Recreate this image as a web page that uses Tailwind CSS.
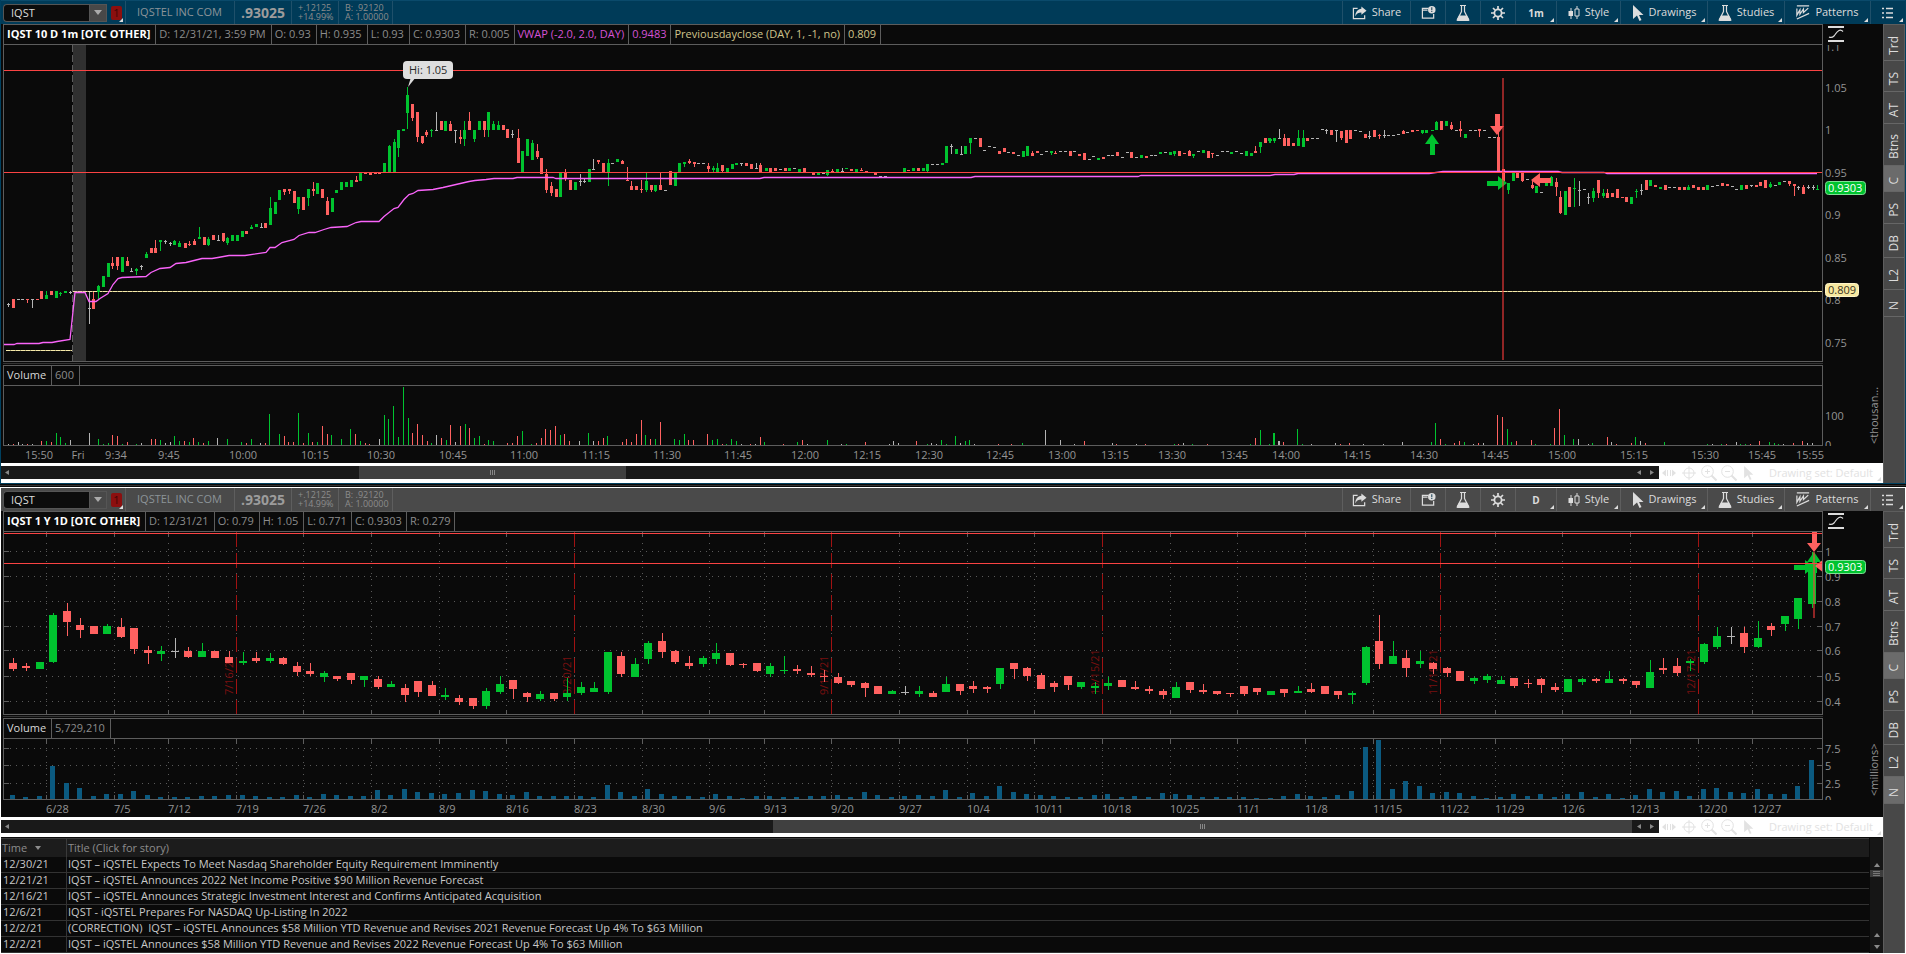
<!DOCTYPE html>
<html lang="en">
<head>
    <meta charset="UTF-8">
    <meta name="viewport" content="width=device-width, initial-scale=1.0">
    <title>IQST - Charts</title>
    <script src="https://cdn.jsdelivr.net/npm/@tailwindcss/browser@4"></script>
</head>
<body class="bg-white font-['Open_Sans','Noto_Sans',sans-serif] text-[11px] leading-4 text-[#8c8c8c] overflow-x-hidden">

<!-- Icon set -->
<svg class="hidden">
    <symbol id="i-share" viewBox="0 0 16 16">
        <path d="M6 3.5H1.5v11h12V11" fill="none" stroke="currentColor" stroke-width="1.3"/>
        <path d="M10 1.5l5.5 4.5-5.5 4.5V8C7 8 5 9 3.5 12c.2-4.500 2.500-7.500 6.500-8z" fill="currentColor"/>
    </symbol>
    <symbol id="i-window" viewBox="0 0 16 16">
        <path d="M8 3.500H1.500v10.500h12V9.500M1.500 5.500H7" fill="none" stroke="currentColor" stroke-width="1.300"/>
        <circle cx="11.500" cy="5" r="4" fill="currentColor"/>
        <path d="M11.500 2.500v3M11.500 6.500v1" stroke="#23485c" stroke-width="1.200"/>
    </symbol>
    <symbol id="i-flask" viewBox="0 0 14 18">
        <path d="M4 1.500h6M5.500 1.500v6L2 14.500h10L8.500 7.500v-6" fill="none" stroke="currentColor" stroke-width="1.200"/>
        <path d="M3 11.500h8l2.500 4.500q0 1-1 1h-11q-1 0-1-1z" fill="currentColor"/>
    </symbol>
    <symbol id="i-gear" viewBox="0 0 16 16">
        <circle cx="8" cy="8" r="3.600" fill="none" stroke="currentColor" stroke-width="1.800"/>
        <path d="M8 1v3M8 12v3M1 8h3M12 8h3M3 3l2 2M11 11l2 2M3 13l2-2M11 5l2-2" stroke="currentColor" stroke-width="1.700"/>
    </symbol>
    <symbol id="i-style" viewBox="0 0 12 16">
        <path d="M3 3v11" stroke="currentColor"/>
        <path d="M.5 6h4.500v5H.500z" fill="currentColor"/>
        <path d="M9 1v3M9 11v3M7 4h4v7H7z" fill="none" stroke="currentColor"/>
    </symbol>
    <symbol id="i-cursor" viewBox="0 0 12 16">
        <path d="M1 0l10.500 10H7l2.500 5-2 1-2.500-5.500L1 14z" fill="currentColor"/>
    </symbol>
    <symbol id="i-patterns" viewBox="0 0 16 18">
        <path d="M1 1.500h14M1 4.500V12l3.500-6v5l4-6v4L14 4M1 16.500L15 10" fill="none" stroke="currentColor" stroke-width="1.400"/>
    </symbol>
    <symbol id="i-list" viewBox="0 0 12 12">
        <path d="M0 1.500h2M4 1.500h7M0 6h2M4 6h7M0 10.500h2M4 10.500h7" stroke="currentColor" stroke-width="1.400"/>
    </symbol>
    <symbol id="i-scale" viewBox="0 0 16 16">
        <path d="M0 1h16M0 15h16" stroke="currentColor" stroke-width="2"/>
        <path d="M1 11c2 1 3 1 5-1s2-4 5-5.500q2-1 4 1" fill="none" stroke="currentColor" stroke-width="1.200"/>
    </symbol>
    <symbol id="i-pan" viewBox="0 0 14 10">
        <path d="M0 5l4-3.500v7zM14 5l-4-3.500v7z" fill="currentColor"/>
        <path d="M5.500 2v6M8.500 2v6" stroke="currentColor"/>
    </symbol>
    <symbol id="i-cross" viewBox="0 0 14 14">
        <path d="M7 0v14M0 7h14" stroke="currentColor"/>
        <circle cx="7" cy="7" r="5" fill="none" stroke="currentColor"/>
    </symbol>
    <symbol id="i-zoomin" viewBox="0 0 16 16">
        <path d="M10.500 10.500l5 5" stroke="currentColor" stroke-width="2"/>
        <path d="M6.500 4v5M4 6.500h5" stroke="currentColor"/>
        <circle cx="6.500" cy="6.500" r="5.800" fill="none" stroke="currentColor"/>
    </symbol>
    <symbol id="i-zoomout" viewBox="0 0 16 16">
        <path d="M10.500 10.500l5 5" stroke="currentColor" stroke-width="2"/>
        <path d="M4 6.500h5" stroke="currentColor"/>
        <circle cx="6.500" cy="6.500" r="5.800" fill="none" stroke="currentColor"/>
    </symbol>
</svg>

<!-- Intraday chart -->
<section class="border-x border-[#00405f] bg-[#0a0a0a]">
    <div data-toolbar="1m" data-bar="bg-[#003b58] border-[#0a4a6b]"></div>
    <div class="flex">
        <div class="flex-1 min-w-0">
            <div class="grid grid-cols-[1fr_60px]">
                <div class="ml-[2px] flex h-[21px] border border-[#5d5d5d] leading-[17px] whitespace-nowrap">
                    <h2 class="pl-[3px] pr-[5px] border-r border-[#5d5d5d] font-bold text-white">IQST 10 D 1m [OTC OTHER]</h2>
                    <span class="pl-[3px] pr-[5px] border-r border-[#5d5d5d]">D: 12/31/21, 3:59 PM</span>
                    <span class="pl-[3px] pr-[5px] border-r border-[#5d5d5d]">O: 0.93</span>
                    <span class="pl-[3px] pr-[5px] border-r border-[#5d5d5d]">H: 0.935</span>
                    <span class="pl-[3px] pr-[5px] border-r border-[#5d5d5d]">L: 0.93</span>
                    <span class="pl-[3px] pr-[5px] border-r border-[#5d5d5d]">C: 0.9303</span>
                    <span class="pl-[3px] pr-[4px] border-r border-[#5d5d5d]">R: 0.005</span>
                    <span class="pl-[3px] pr-[4px] border-r border-[#5d5d5d] text-[#d552d5]">VWAP (-2.0, 2.0, DAY)</span>
                    <span class="pl-[3px] pr-[4px] border-r border-[#5d5d5d] text-[#d552d5]">0.9483</span>
                    <span class="pl-[3px] pr-[4px] border-r border-[#5d5d5d] text-[#cfc48c]">Previousdayclose (DAY, 1, -1, no)</span>
                    <span class="pl-[3px] pr-[4px] border-r border-[#5d5d5d] text-[#cfc48c]">0.809</span>
                </div>
                <div class="pl-[5px] pt-[2px] text-[#dcdcdc]"><svg class="w-4 h-4"><use href="#i-scale"/></svg></div>

                <div class="ml-[2px] h-[317px] border-x border-b border-[#5d5d5d]"><svg id="price1" class="block w-full h-full"></svg></div>
                <svg id="axis1" class="block w-[60px] h-[317px]"></svg>

                <div class="ml-[2px] h-[2px] border-b border-[#333]"></div><div></div>

                <div class="ml-[2px] mt-px flex h-[20px] border border-b-0 border-[#5d5d5d] leading-[17px]">
                    <h3 class="pl-[3px] pr-[5px] border-r border-[#5d5d5d] text-[#d8d8d8]">Volume</h3>
                    <span class="pl-[3px] pr-[5px] border-r border-[#5d5d5d]">600</span>
                </div>
                <div></div>

                <div class="ml-[2px] h-[61px] border border-[#5d5d5d]"><svg id="vol1" class="block w-full h-full"></svg></div>
                <svg id="volAxis1" class="block w-[60px] h-[61px]"></svg>

                <svg id="time1" class="col-span-2 block w-full h-[17px]"></svg>
            </div>
            <div data-scroll="358,625"></div>
        </div>
        <nav data-tabs="C"></nav>
    </div>
</section>

<div class="h-[4px] border-t border-[#00405f] bg-[#0a0a0a] pt-px"><div class="h-px bg-[#333]"></div></div>

<!-- Daily chart -->
<section class="border-x border-white bg-[#0a0a0a]">
    <div data-toolbar="D" data-bar="bg-[#4a4a4a] border-white"></div>
    <div class="flex">
        <div class="flex-1 min-w-0">
            <div class="grid grid-cols-[1fr_60px]">
                <div class="ml-[2px] flex h-[21px] border border-[#5d5d5d] leading-[17px] whitespace-nowrap">
                    <h2 class="pl-[3px] pr-[5px] border-r border-[#5d5d5d] font-bold text-white">IQST 1 Y 1D [OTC OTHER]</h2>
                    <span class="pl-[3px] pr-[5px] border-r border-[#5d5d5d]">D: 12/31/21</span>
                    <span class="pl-[3px] pr-[5px] border-r border-[#5d5d5d]">O: 0.79</span>
                    <span class="pl-[3px] pr-[5px] border-r border-[#5d5d5d]">H: 1.05</span>
                    <span class="pl-[3px] pr-[4px] border-r border-[#5d5d5d]">L: 0.771</span>
                    <span class="pl-[3px] pr-[4px] border-r border-[#5d5d5d]">C: 0.9303</span>
                    <span class="pl-[3px] pr-[4px] border-r border-[#5d5d5d]">R: 0.279</span>
                </div>
                <div class="pl-[5px] pt-[2px] text-[#dcdcdc]"><svg class="w-4 h-4"><use href="#i-scale"/></svg></div>

                <div class="ml-[2px] h-[183px] border-x border-b border-[#5d5d5d]"><svg id="price2" class="block w-full h-full"></svg></div>
                <svg id="axis2" class="block w-[60px] h-[183px]"></svg>

                <div class="ml-[2px] h-[2px] border-b border-[#333]"></div><div></div>

                <div class="ml-[2px] mt-px flex h-[20px] border border-b-0 border-[#5d5d5d] leading-[17px]">
                    <h3 class="pl-[3px] pr-[5px] border-r border-[#5d5d5d] text-[#d8d8d8]">Volume</h3>
                    <span class="pl-[3px] pr-[5px] border-r border-[#5d5d5d]">5,729,210</span>
                </div>
                <div></div>

                <div class="ml-[2px] h-[62px] border border-[#5d5d5d]"><svg id="vol2" class="block w-full h-full"></svg></div>
                <svg id="volAxis2" class="block w-[60px] h-[62px]"></svg>

                <svg id="time2" class="col-span-2 block w-full h-[17px]"></svg>
            </div>
            <div data-scroll="772,1632"></div>

            <!-- News -->
            <div class="flex pt-px">
                <table class="flex-1 table-fixed w-full border-separate border-spacing-0 text-left text-[#c8c8c8]">
                    <thead>
                        <tr class="bg-[#1c1c1c] text-[#8c8c8c]">
                            <th class="w-[66px] h-[19px] p-0 pl-px border-t border-r border-[#3a3a3a] font-normal">
                                <button class="flex items-center gap-2">Time <svg class="w-[6px] h-[4px]" viewBox="0 0 6 4"><path d="M0 0h6L3 4z" fill="currentColor"/></svg></button>
                            </th>
                            <th class="p-0 pl-px border-t border-[#3a3a3a] font-normal">Title (Click for story)</th>
                        </tr>
                    </thead>
                    <tbody id="news"></tbody>
                </table>
                <div class="ml-px w-[13px] bg-[#161616] text-[#8c8c8c] flex flex-col items-center">
                    <svg class="mt-[25px] w-[6px] h-1" viewBox="0 0 6 4"><path d="M0 4h6L3 0z" fill="currentColor"/></svg>
                    <div class="mt-[3px] w-full h-[7px] bg-[#3c3c3c] px-[3px] py-px flex flex-col justify-between">
                        <i class="h-px bg-[#777]"></i><i class="h-px bg-[#777]"></i><i class="h-px bg-[#777]"></i>
                    </div>
                    <svg class="mt-auto w-[6px] h-1" viewBox="0 0 6 4"><path d="M0 4h6L3 0z" fill="currentColor"/></svg>
                    <svg class="mt-2 mb-1 w-[6px] h-1" viewBox="0 0 6 4"><path d="M0 0h6L3 4z" fill="currentColor"/></svg>
                </div>
            </div>
        </div>
        <nav data-tabs="C,N"></nav>
    </div>
</section>

<script>
const GREEN = '#00c32f', RED = '#ff6160', GRAY = '#b4b4b4', LINE = '#fa4343';
const COLORS = { g: GREEN, r: RED, w: GRAY };
const corner = '<i class="absolute right-[2px] bottom-[2px] border-l-4 border-b-4 border-l-transparent border-b-[#dcdcdc]"></i>';

// Toolbars
document.querySelectorAll('[data-toolbar]').forEach((el, n) => {
    const tf = el.dataset.toolbar;
    const sep = n === 0 ? 'border-[#1f506a]' : 'border-[#5e5e5e]';
    const btn = (w, icon, size, label, mark) => `
        <button class="relative ${w} h-full border-l ${sep} flex items-center justify-center gap-[5px]" aria-label="${label || icon}">
            ${icon ? `<svg class="${size}"><use href="#i-${icon}"/></svg>` : ''}${label ? `<span class="leading-[18px] pb-px">${label}</span>` : ''}${mark ? corner : ''}
        </button>`;
    el.innerHTML = `
    <header class="${el.dataset.bar} border-t h-6 flex text-[#dcdcdc] whitespace-nowrap">
        <div class="relative w-[124px] flex items-center pl-[2px]">
            <label class="sr-only" for="sym${n}">Symbol</label>
            <input id="sym${n}" value="IQST" class="w-[86px] h-[18px] pl-[7px] leading-4 rounded-l-sm border border-r-0 border-[#555] bg-[#0c0c0c] outline-none">
            <button aria-label="Symbols" class="w-[18px] h-[18px] border border-[#555] bg-[#484848] flex items-center justify-center">
                <svg class="w-2 h-[5px]" viewBox="0 0 8 5"><path d="M0 0h8L4 5z" fill="#aaa"/></svg>
            </button>
            <button class="ml-1 w-[11px] h-[14px] rounded-xs bg-[#8c0f0f] text-[#3c0505] leading-[14px]">1</button>${corner}
        </div>
        <div class="w-[109px] border-l ${sep} pl-[11px] leading-[21px] text-[#8c9498]">IQSTEL INC COM</div>
        <div class="w-[57px] border-l ${sep} pl-[6px] leading-[23px] text-[14px] font-bold text-[#9c9c9c]">.93025</div>
        <div class="w-[47px] border-l ${sep} pl-[6px] pt-[2px] text-[9px] leading-[9px] text-[#8c8c8c]">+.12125<br>+14.99%</div>
        <div class="w-[55px] border-x ${sep} pl-[6px] pt-[2px] text-[9px] leading-[9px] text-[#8c8c8c]">B: .92120<br>A: 1.00000</div>
        <div class="ml-auto flex">
            ${btn('w-[68px]', 'share', 'w-[15px] h-[15px]', 'Share')}
            ${btn('w-[35px]', 'window', 'w-[15px] h-[15px]')}
            ${btn('w-[35px]', 'flask', 'w-[14px] h-[18px]')}
            ${btn('w-[35px]', 'gear', 'w-4 h-4')}
            <button class="relative w-[41px] h-full border-l ${sep} text-[10px] font-bold">${tf}${corner}</button>
            ${btn('w-[64px]', 'style', 'w-3 h-4', 'Style', true)}
            ${btn('w-[87px]', 'cursor', 'w-3 h-4', 'Drawings', true)}
            ${btn('w-[77px]', 'flask', 'w-[14px] h-[18px]', 'Studies', true)}
            ${btn('w-[86px]', 'patterns', 'w-[14px] h-[17px]', 'Patterns', true)}
            ${btn('w-[35px]', 'list', 'w-3 h-3', '', true)}
        </div>
    </header>`;
});

// Side tabs
document.querySelectorAll('[data-tabs]').forEach(el => {
    const active = el.dataset.tabs.split(',');
    const tabs = [['Trd', 'h-[36px]'], ['TS', 'h-[31px]'], ['AT', 'h-[32px]'], ['Btns', 'h-[42px]'], ['C', 'h-[26px]'],
                  ['PS', 'h-[32px]'], ['DB', 'h-[34px]'], ['L2', 'h-[32px]'], ['N', 'h-[27px]']];
    el.className = 'w-[22px] border-l border-t border-r border-[#5d5d5d] bg-[#484848] text-[#dcdcdc]';
    el.innerHTML = tabs.map(([t, h]) => `
        <button class="${h} w-full pt-[5px] border-b border-[#666] flex items-center justify-center ${active.includes(t) ? 'bg-[#6b6b6b]' : ''}">
            <span class="[writing-mode:vertical-rl] rotate-180 text-[12px] leading-[16px]">${t}</span>
        </button>`).join('');
});

// Scrollbars + drawing tools
document.querySelectorAll('[data-scroll]').forEach(el => {
    const [a, b] = el.dataset.scroll.split(',').map(Number);
    el.innerHTML = `
    <div class="h-5 bg-white flex items-start text-[#e2e2e2]">
        <div class="relative flex-1 mt-[3px] h-[13px] bg-[#191919]">
            <div class="absolute inset-y-0 bg-[#404040] flex items-center justify-center gap-px" style="left:${a / 16.59}%;width:${(b - a) / 16.59}%">
                <i class="w-px h-[5px] bg-[#888]"></i><i class="w-px h-[5px] bg-[#888]"></i><i class="w-px h-[5px] bg-[#888]"></i>
            </div>
            <svg class="absolute left-1 top-1 w-1 h-[5px]" viewBox="0 0 4 5"><path d="M4 0v5L0 2.500z" fill="#888"/></svg>
            <svg class="absolute right-[18px] top-1 w-1 h-[5px]" viewBox="0 0 4 5"><path d="M4 0v5L0 2.500z" fill="#888"/></svg>
            <svg class="absolute right-[5px] top-1 w-1 h-[5px]" viewBox="0 0 4 5"><path d="M0 0v5l4-2.500z" fill="#888"/></svg>
        </div>
        <div class="relative w-[224px] h-full flex items-center whitespace-nowrap">
            <button aria-label="Pan" class="ml-[3px]"><svg class="w-[14px] h-[10px]"><use href="#i-pan"/></svg></button>
            <button aria-label="Crosshair" class="ml-[6px]"><svg class="w-[14px] h-[14px]"><use href="#i-cross"/></svg></button>
            <button aria-label="Zoom in" class="ml-[5px]"><svg class="w-4 h-4"><use href="#i-zoomin"/></svg></button>
            <button aria-label="Zoom out" class="ml-1"><svg class="w-4 h-4"><use href="#i-zoomout"/></svg></button>
            <button aria-label="Pointer" class="ml-[6px]"><svg class="w-[11px] h-[14px]"><use href="#i-cursor"/></svg></button>
            <button class="ml-[15px]">Drawing set: Default</button>
            <i class="absolute right-[2px] bottom-[2px] border-l-4 border-b-4 border-l-transparent border-b-[#dcdcdc]"></i>
        </div>
    </div>`;
});

// News table
const news = [
    ['12/30/21', 'IQST – iQSTEL Expects To Meet Nasdaq Shareholder Equity Requirement Imminently'],
    ['12/21/21', 'IQST – iQSTEL Announces 2022 Net Income Positive $90 Million Revenue Forecast'],
    ['12/16/21', 'IQST – iQSTEL Announces Strategic Investment Interest and Confirms Anticipated Acquisition'],
    ['12/6/21', 'IQST - iQSTEL Prepares For NASDAQ Up-Listing In 2022'],
    ['12/2/21', '(CORRECTION)  IQST – iQSTEL Announces $58 Million YTD Revenue and Revises 2021 Revenue Forecast Up 4% To $63 Million'],
    ['12/2/21', 'IQST – iQSTEL Announces $58 Million YTD Revenue and Revises 2022 Revenue Forecast Up 4% To $63 Million'],
];
document.getElementById('news').innerHTML = news.map(([d, t]) => `
    <tr><td class="h-4 p-0 pl-[2px] align-top leading-[13px] border-b border-r border-[#333]">${d}</td>
        <td class="h-4 p-0 pl-px align-top leading-[13px] border-b border-[#333] whitespace-pre"><a href="#">${t}</a></td></tr>`).join('');

// Chart data. Candle: colour, body top-bottom, optional :wick top-bottom
const STEP1 = 4.7625, STEP2 = 13.53, WIDTH = 1818;
const candles1 = [
    [8, 'w304:303-307 r299-308 w299 w299 r299:299-303 w299:299-308 r299 r291-299 g295-299:291-299 r291-295 g291-298 g293-294:292-296 g291-293 w292:291-294'],
    [88.6, 'w308:292-324 r299-309:292-309 g286-292:285-299 g276-287 g263-277 r263-266:257-269 r257-266:257-270 g257-272 r261-266:257-266 w271:268-272 g269-271:268-275 w266:265-270 g254-258:252-258 r248-253 r248-253:240-253 g240-242:240-251 w241:240-244 w243:242-246 g241-245:240-245 g243-247:241-247'],
    [184.5, 'r243-248 r244-245:241-246 r241-245:239-245 g237-239:227-239 r237-245 g239-245:237-246 r235-240 w240:235-241 r233-241:233-242 g238-243:237-245 g235-241 g235-241 g231-237 r231-234 g227-229:225-229 g224-227 w227:223-228 r223-228'],
    [269.8, 'g208-225:197-225 g202-214 g190-200 r189-192:189-195 r189-191:189-194 r191-203 g197-209:197-214 r197-210 g189-198:189-206 r189-191:182-196 g183-194 r189-198 r201-215:197-215 g198-212 g190-193 g182-190 g182-187 g180-187 r180-182:176-182 g173-181 r173-174 r173-175 r173-174 r173-174 g163-172 g146-172:145-172 g142-172:139-172 g130-148:130-157 g129-131'],
    [407.3, 'g95-113:87-129 r104-118:104-121 r112-137:112-142 r136-143:136-144 r132-135:130-137 g130-131:129-137 w130:112-130 r121-130 g121-131 r124-131:121-131 w130:130-143 r137-139:130-144 g130-139:121-146 r121-130:112-130 g130-139:130-142 g121-130 r121-130:121-137 g112-130:112-137 g124-130:121-130 g125-130:121-130 r125-130 r129-138 w134:130-138'],
    [517.6, 'r138-163:129-163 g151-172 g139-156 g143-160:140-160 r151-157:144-159 r158-174 r174-190:169-193 r186-193:182-196 r189-197 g173-197 r172-179:169-181 r180-190 g182-190 w181:174-186 w181:178-183'],
    [588.6, 'g169-182 w169:159-170 r160-162:160-164 r163-172 g163-172:159-186 w163 g159-162 r161-164:160-164 r180-181:167-181 r186-190:181-190 r186-190'],
    [641.2, 'r189-190:180-193 g181-190:173-192 r185-190:185-192 g185-191:185-192 r185-190:173-190 w190 r171-185 g173-186 g163-172 g162-164:162-167 r161-163:159-164 r162-164:162-167 w163 w163 r166-169:163-172 g168-170:166-172 g168-172:163-172 r165-171:165-172 g168-172 g164-169 g163-165 w163:163-166 r163-166 r164-169 w168:163-169 r165-172:163-172'],
    [765.5, 'g168-171 r168-172 r168-171 w169 r168-171 g168-171 w168 g169-172 r168-172 r172-173 r173-175 g173-175 w173 g170-175:170-176 r171-172:169-172 g169-172 w171:168-172 g168-169 r169-171 g169-172 r170-171:168-171 r171-172 r172-173 r173-175 w176 w176'],
    [903.5, 'g168-172 r170-171 g168-171 r168-171 g168-171 g164-171:164-172 w164 w164 g163-165 g146-163 w146:144-154 g149-154 w154:146-155 g146-154 g138-143:138-154 w138 r138-147 w150 w146 w147 r151-154 r148-152 w152 r152-154 w155 g151-157 g146-156 r153-156:151-156 r151-153'],
    [1041, 'w154 w151 g151-153:151-155 r153:151-154 w151 w151 r151-156 w151 r154-156 r153-160 w159 w156 g158-160 r157-159 w155 w155 r152-156 w157 w152 r152-158 w157 g155-158 r156-158 w155 w155 g152-154 w152 g152-155 g151-154:151-156 r151-156 r153-154'],
    [1188.6, 'r151-156:150-156 g154-156:154-158 w151 g150-153 r151-158 r153:153-158 w155 w151 w151 g152-154 w151 w153 g151-156 g153-156 r151-153:146-153 g142-147:142-153 r138-143 g139-141:138-143 g138-141 w138:129-139'],
    [1269.3, 'g138-141:138-143 g138-141:138-143 w138:129-138 r138-146:134-146 r138-146:138-146 r143-146 g138-146:130-146 g138-147:130-147 r138-141 w138 w138 w129 w130:129-134 r130-135 w130:130-142 r131-138:131-140 r130-143 r130-139 w130 w131 r134-138 w136:131-139 r130-137 r135:134-139 w135:130-138 w135 w135 w134 r131-134:130-134 w132 r130-132 r130-131 g130-133:130-134 g130-133'],
    [1431.7, 'g130 g122-130:121-130 r121-130 g121-126 r125-129:122-130 w130 r129-131:121-137 g134-138 w130 w130 r129-131:129-137 w130 w137 w137 r137-172:131-172 r169-182 g183-190:183-194 g173-181 r173-178 r173-181:173-182 w179 r185-188:180-189 g186-193 w192 g180-186 g177-186:176-186 r182-187:178-196 r197-213:191-214 g191-215'],
    [1569.3, 'r187-207 g188-189:178-207 w190:181-206 w189 w197:193-204 g191-198:188-202 r180-193:180-198 g193-196:189-198 r193-198:189-198 r193-197 r189-198 r197 r197-202 g197-204 g191-192:189-198 w190:184-195 r180-190 g180-186 r185-187 g187-189 r185-190 w187 w187 r187-190 r187-190 g187-190:185-190 r185-188 r187-190 r187-190 g185-190 w186'],
    [1717.4, 'w185 r183-186 r184-186 w186 w189 g185-190 r185-189 w185:185-187 r185-187 r182-186 r180-188 g184-187:182-188 w185 g182-185 w181 r181-184:181-186 r184-186:184-196 w187:186-190 r187-194:185-194 w187:185-189 w187:185-190 g189:185-190'],
];
const volume1 = [
    [8, 'w1 r1 w3 w1 r1 w1 . r4 g4 r3 g12 g8 g2 w5'],
    [88.6, 'w12 . g6 g1 g2 r10 r9 g1 r3 . g1 w2 . r6 r6 g5 w2 w3 g9 g4 r4 g3 r7 g3 r2 g4 . w7 . g6 . . g3 r2 g6 . w2 r2'],
    [269.4, 'g31 . g11 r9 r3 r3 g32 r2 g12 r3 g3 r19 r11 g10 . g6 . g16 r11 g4 r2 r1 . w6 g30 g26 g39 g8 g58 g27 r12 r21 r10 r4 g2 w10 r7 g5 r20 w3 r19 g21 r17 g7 g9 r1 g5 g4'],
    [507.3, 'r2 r2 r9 g14 . g1 r2 r7 r16 r15 r19 g10 r11 r4 . w4 . g12 w4 r4 r7 g9 . . r3 r6 r3 r11 r25 g10 r6 g6 r23 . . g6 g5 g11 r5 r5 . . r11 g5 g6 r1 g1 g6 g4 w1 . r1 w1 r8 g3'],
    [783, 'r1 . . g3 r5 w1'], [826.5, 'g5 . . w1 g1'], [864.5, 'r3'], [888.5, 'w1 w4 w2'], [916, 'r4'],
    [926.5, 'g1 w2 w1 g5 g1 . g9 w2 g4 g5 w1'], [997.5, 'r1'], [1011, 'r1'], [1021.5, 'g2'], [1045, 'w15'], [1059.5, 'w5'],
    [1073.5, 'w1'], [1083.5, 'r4'], [1111.5, 'w2 r1'], [1135.5, 'w1'], [1145, 'r1'], [1173.5, 'g1 r1 w2'], [1192, 'g1'], [1207, 'r1'],
    [1250, 'g1 r7 g15 . g1 g12 w4'],
    [1273, 'g12 w4 r3 . . g16 g1 . w1 . . . . w2 r1 . r2 . . w1 . . . w1 . . . w3'],
    [1430.5, 'g3 g22 r6 g1 . r2 r4 g3 . w1 r2 w2 . . r30 r28 g16 g3 r4 . . r5 g1 . . g1 r17 r36 g10 . g6 w6 . w1 g2 . . r8 w3 r1 . . r2 g8 w4 r2 . . . g3'],
    [1707, 'g1 w1 . g1 r1 . w3 g1 g1 r1 . r4 . g3 g2 g1 w1 . r2 . r4 w2 w2'],
];
const vwap = '4,344 14,344 17,343 39,343 43,342 52,342 57,341 70,339 75,292 85,292 89,301 96,301 100,298 108,293 113,284 118,278 122,277 146,276 151,272 160,268 170,267 176,263 186,262 202,258 212,258 218,257 229,255 245,255 266,252 270,247 275,247 282,242 294,239 299,235 309,232 315,232 324,229 331,227 347,226 356,222 361,221 379,221 384,216 394,208 398,207 404,199 409,194 413,193 418,190 433,189 443,187 469,181 475,180 486,179 494,178 513,178 517,177 553,177 556,178 760,178 764,177 971,177 975,176 1138,176 1141,175 1270,175 1275,174 1294,174 1298,173 1429,173 1443,171 1558,171 1562,172 1604,172 1607,173 1817,173';
const times1 = [['15:50', 39], ['Fri', 78], ['9:34', 116], ['9:45', 169], ['10:00', 243], ['10:15', 315], ['10:30', 381], ['10:45', 453], ['11:00', 524],
    ['11:15', 596], ['11:30', 667], ['11:45', 738], ['12:00', 805], ['12:15', 867], ['12:30', 929], ['12:45', 1000], ['13:00', 1062], ['13:15', 1115],
    ['13:30', 1172], ['13:45', 1234], ['14:00', 1286], ['14:15', 1357], ['14:30', 1424], ['14:45', 1495], ['15:00', 1562], ['15:15', 1634],
    ['15:30', 1705], ['15:45', 1762], ['15:55', 1810]];

const candles2 = [[12.5, 'r303-309:298-311 r306-308:303-311 g302-309 g255-302:253-303 r251-262:243-276 r265-270:258-278 r266-274 g266-274:264-274 r267-277:258-278 r268-289:268-294 r290-293:286-304 g291-294:286-301 w291:278-298 r291-297:287-298 g291-297:283-297 r291-298 r297-303:291-303 g301-303:292-305 r298-301:292-303 g298-301:293-303 r298-304:297-305 r306-312:302-316 r311-314:303-316 g313-317:311-322 r316-319:316-321 r313-320:313-324 g316-320:316-327 r319-327:316-329 g324-327:321-327 r328-335:324-342 r321-332:321-337 r325-336:321-336 g335-337:328-340 r338-342:335-345 r338-346:338-349 g331-346:328-349 g324-332:316-334 r320-329:320-339 r333-337:332-342 g334-339:331-341 r333-339:333-341 g333-337:318-341 g327-333:322-335 g328-332:322-332 g292-332:292-334 r296-314:292-317 g304-317:298-317 g283-299:281-304 r281-292:273-298 r291-302:290-304 r303-306:296-309 g298-304:296-307 g293-299:283-304 r293-305:293-306 r304-305:303-308 r303-311:303-312 g306-314:303-317 g310-311:296-314 r309-311:305-314 r313-315:306-317 r316-317:310-322 r317-323:313-324 r321-325:321-327 r323-328:322-337 r326-334 g331-334:330-334 w332:326-335 g331-334:326-337 r333-337:331-337 g324-332:317-332 r324-331:324-335 r326-329:321-333 r327-329:326-333 g308-324:308-329 r303-309:303-319 r308-316:307-321 r315-329:313-329 r323-327:321-332 r316-325:316-330 g322-327:322-329 g326-328:322-334 g323-326:317-330 r320-327 r327-329:321-330 r329-331:326-334 r331-335:329-339 g327-338:322-338 r322-330:322-333 r330-332:324-334 r331-334:331-335 r333:333-337 r326-334:326-336 r328-332:328-335 g331-335 r329-333:329-337 g331-333:326-333 r329-332:323-333 r326-334 r331-335:331-339 g333-335:331-344 g287-323:286-325 r281-304:255-309 g296-304:281-304 r298-308:290-317 g301-304:291-308 r303-309:302-314 r308-313:307-317 r311-321 g318-321:317-324 g316-320:314-323 g320-324:316-324 r318-326:318-328 r323:319-328 r319-325:318-333 r327-330:323-332 g319-332 g319-322:318-325 r319-321:318-323 g319-323:311-323 r319-321:318-324 r321-325:321-328 g312-328:300-328 r308-310:298-314 r306-313:298-316 g301-303:299-311 g284-302:283-304 g276-287:267-289 w276:267-284 r273-287:267-293 g278-287:261-288 r266-270:263-276 g256-264:256-271 g238-259:238-269 g204-244:192-248']];
const volume2 = [4,2,3,33,16,11,3,5,5,8,4,2,2,2,3,3,4,4,3,2,2,4,2,5,4,3,3,9,4,10,7,6,5,6,9,8,5,4,7,3,3,3,3,2,14,7,3,
    10,5,3,3,2,5,3,1,3,3,2,2,3,3,4,2,7,4,2,3,4,3,9,2,6,3,13,7,5,4,3,2,2,4,5,2,3,2,6,5,4,2,2,2,2,1,1,
    3,5,3,2,4,8,52,59,10,18,13,6,7,6,3,1,2,5,3,5,2,5,7,2,5,1,4,10,7,8,3,10,11,7,6,10,5,5,13,39];
const times2 = [['6/28', 46], ['7/5', 114], ['7/12', 168], ['7/19', 236], ['7/26', 303], ['8/2', 371], ['8/9', 439], ['8/16', 506], ['8/23', 574],
    ['8/30', 642], ['9/6', 709], ['9/13', 764], ['9/20', 831], ['9/27', 899], ['10/4', 967], ['10/11', 1034], ['10/18', 1102], ['10/25', 1170],
    ['11/1', 1237], ['11/8', 1305], ['11/15', 1373], ['11/22', 1440], ['11/29', 1495], ['12/6', 1562], ['12/13', 1630], ['12/20', 1698], ['12/27', 1752]];
const expirations = [['7/16/21', 236], ['8/20/21', 574], ['9/17/21', 831], ['10/15/21', 1102], ['11/19/21', 1440], ['12/17/21', 1698]];

const $ = id => document.getElementById(id);
const rect = (x, y, w, h, c) => `<rect x="${x}" y="${y}" width="${w}" height="${h}" fill="${c}"/>`;
const text = (x, y, s, extra = '') => `<text x="${x}" y="${y}" fill="#949494" ${extra}>${s}</text>`;
const poly = (pts, c, dx, dy) => `<polygon points="${pts}" fill="${c}" transform="translate(${dx} ${dy})"/>`;
const ARROW = {
    up: '0,0 7,10 3,10 3,21 -2,21 -2,10 -7,10',
    down: '0,0 7,-9 3,-9 3,-21 -2,-21 -2,-9 -7,-9',
    right: '0,0 -9,-7 -9,-2 -20,-2 -20,3 -9,3 -9,7',
    left: '0,0 9,-7 9,-2 20,-2 20,3 9,3 9,7',
};

function drawCandles(segments, step, w, X, top) {
    let out = '';
    for (const [x0, list] of segments) {
        list.split(' ').forEach((item, i) => {
            const x = Math.round(X(x0 + i * step));
            const [body, wick] = item.slice(1).split(':');
            const [a, b = a] = body.split('-').map(Number);
            const c = COLORS[item[0]];
            if (wick) {
                const [t, u] = wick.split('-').map(Number);
                out += rect(x, t - top, 1, Math.max(1, u - t), c);
            }
            out += rect(x - Math.floor(w / 2), a - top, w, Math.max(1, b - a), c);
        });
    }
    return out;
}

function badge(y, w, label, bg, fg, line) {
    return `<rect x="2.5" y="${y}.5" width="${w}" height="13" rx="3" fill="${bg}" stroke="${line}"/><text x="5" y="${y + 11}" fill="${fg}">${label}</text>`;
}

function draw() {
    const W = $('price1').clientWidth || $('price1').parentElement.clientWidth;
    const s = W / WIDTH;
    const X = x => (x - 4) * s;

    // Intraday price
    let o = rect(X(73), 0, 13 * s, 316, '#303030');
    o += `<path d="M${Math.round(X(72)) + 0.5} 0V316" stroke="#5d5d5d" stroke-dasharray="7 3"/>`;
    o += `<path d="M${X(6)} 305.5H${X(72)}M${X(73)} 246.5H${W}" stroke="#a89f70"/>`;
    o += `<path d="M${X(6)} 305.5H${X(72)}M${X(73)} 246.5H${W}" stroke="#f5e9a8" stroke-dasharray="4 1"/>`;
    o += drawCandles(candles1, STEP1, 3, X, 45);
    o += `<polyline points="${vwap.split(' ').map(p => { const [x, y] = p.split(','); return X(+x) + ',' + (y - 44.5); }).join(' ')}" fill="none" stroke="#fa64fa" stroke-width="1.3"/>`;
    o += rect(0, 25, W, 1, LINE) + rect(0, 127, W, 1, LINE);
    o += poly(ARROW.up, GREEN, X(1432), 89) + poly(ARROW.down, RED, X(1497), 90);
    o += poly(ARROW.right, GREEN, X(1507), 138) + poly(ARROW.left, RED, X(1531), 135);
    o += `<rect x="${Math.round(X(1502))}" y="33" width="2" height="282" fill="#ff3c3c" opacity=".55"/>`;
    o += poly('0,0 3,-10 8,-10', '#dcdcdc', X(408), 42);
    o += `<rect x="${X(403)}" y="16" width="50" height="18" rx="4" fill="#dedede"/><text x="${X(409)}" y="29" fill="#2a2a2a">Hi: 1.05</text>`;
    $('price1').innerHTML = o;

    $('axis1').innerHTML = [['1.1', 47], ['1.05', 88], ['1', 130], ['0.95', 173], ['0.9', 215], ['0.85', 258], ['0.8', 300], ['0.75', 343]]
        .map(([t, y]) => text(2, y - 41, t)).join('')
        + badge(136, 40, '0.9303', GREEN, '#fff', '#7fe096') + badge(238, 33, '0.809', '#f8e9a0', '#3a3420', '#fff5c8');

    // Intraday volume
    o = '';
    for (const [x0, list] of volume1) {
        list.split(' ').forEach((v, i) => {
            if (v !== '.') o += rect(Math.round(X(x0 + i * STEP1)), 59 - v.slice(1), 1, v.slice(1), COLORS[v[0]]);
        });
    }
    $('vol1').innerHTML = o;
    $('volAxis1').innerHTML = text(2, 35, '100') + text(2, 64, '0') + text(-59, 55, '&lt;thousan...', 'transform="rotate(-90)"');
    $('time1').innerHTML = times1.map(([t, x]) => text((x - 1) * s, 13, t, 'text-anchor="middle"')).join('');

    // Daily price
    const grid = (h, ys) => {
        let g = '';
        times2.forEach(([, x]) => {
            const gx = Math.round(X(x)) + 0.5;
            g += `<path d="M${gx} 11V${h - 5}" stroke="#5a5a5a" stroke-dasharray="1 5"/><path d="M${gx} 0V5M${gx} ${h - 4}V${h}" stroke="#5d5d5d"/>`;
        });
        ys.forEach(y => { g += `<path d="M6 ${y}.5H${W - 6}" stroke="#5a5a5a" stroke-dasharray="1 5"/><path d="M0 ${y}.5H5M${W - 5} ${y}.5H${W}" stroke="#5d5d5d"/>`; });
        return g;
    };
    o = grid(182, [19, 44, 69, 94, 118, 144, 169]);
    expirations.forEach(([t, x]) => {
        o += `<path d="M${Math.round(X(x)) + 0.5} 0V182" stroke="#a01212" stroke-dasharray="15 6"/>`;
        o += `<text transform="translate(${X(x) - 3} 163) rotate(-90)" fill="#7a1010">${t}</text>`;
    });
    o += drawCandles(candles2, STEP2, 8, X, 172);
    o += poly(ARROW.up, GREEN, X(1814), 20) + poly(ARROW.right, GREEN, X(1814), 35) + poly(ARROW.left, RED, X(1815), 34) + poly(ARROW.down, RED, X(1814), 20);
    o += `<rect x="${Math.round(X(1813))}" y="20" width="2" height="66" fill="#ff3c3c" opacity=".55"/>`;
    o += rect(0, 1, W, 1, LINE) + rect(0, 31, W, 1, LINE);
    $('price2').innerHTML = o;
    $('axis2').innerHTML = [['1', 24], ['0.9', 49], ['0.8', 74], ['0.7', 99], ['0.6', 123], ['0.5', 149], ['0.4', 174]].map(([t, y]) => text(2, y, t)).join('')
        + badge(28, 40, '0.9303', GREEN, '#fff', '#7fe096');

    // Daily volume
    o = grid(60, [9, 26, 44]);
    volume2.forEach((h, i) => { o += rect(Math.round(X(11.5 + i * STEP2)) - 2, 60 - h, 5, h, '#0b5a80'); });
    $('vol2').innerHTML = o;
    $('volAxis2').innerHTML = text(2, 15, '7.5') + text(2, 32, '5') + text(2, 50, '2.5') + text(2, 66, '0') + text(-58, 55, '&lt;millions&gt;', 'transform="rotate(-90)"');
    $('time2').innerHTML = times2.map(([t, x]) => text((x - 1) * s, 13, t)).join('');
}
draw();
new ResizeObserver(draw).observe($('price1').parentElement);
window.addEventListener('load', draw);
</script>
</body>
</html>
